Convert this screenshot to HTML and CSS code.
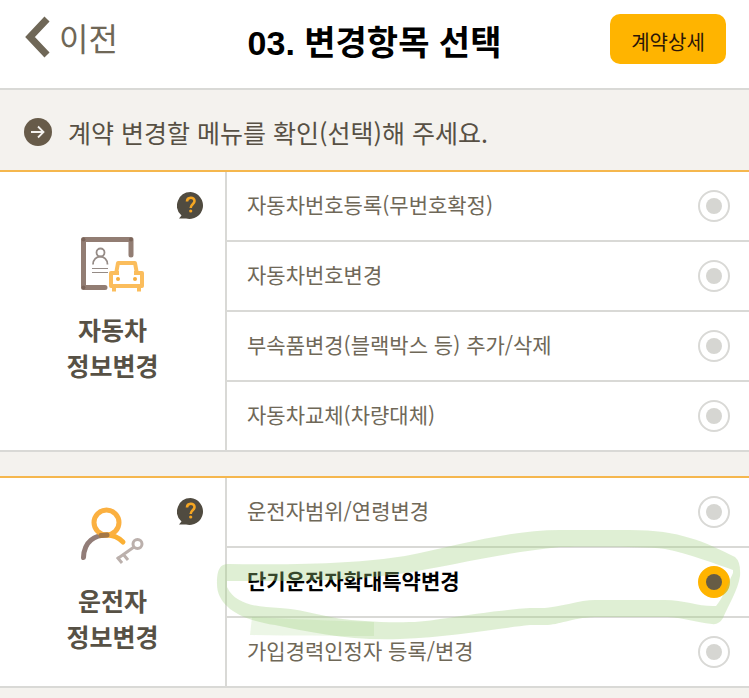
FILE: index.html
```html
<!DOCTYPE html>
<html lang="ko">
<head>
    <meta charset="utf-8">
    <title>변경항목 선택</title>
    <meta name="viewport" content="width=device-width, initial-scale=1">
    <link rel="stylesheet" href="styles.css">
</head>
<body>
    <header class="header">
        <a class="back" href="#">
            <svg width="26" height="42" viewBox="0 0 26 42" aria-hidden="true">
                <path d="M22 3 L5 21 L22 39" fill="none" stroke="#6f6757" stroke-width="7"/>
            </svg>
            이전
        </a>
        <h1 class="title">03. 변경항목 선택</h1>
        <button class="detail" type="button">계약상세</button>
    </header>

    <div class="notice">
        <svg width="28" height="28" viewBox="0 0 28 28" aria-hidden="true">
            <circle cx="14" cy="14" r="14" fill="#675b49"/>
            <path d="M7 14 H19 M14 8.500 L19.500 14 L14 19.500" fill="none" stroke="#f4f2ee" stroke-width="1.800"/>
        </svg>
        <p>계약 변경할 메뉴를 확인(선택)해 주세요.</p>
    </div>

    <form>
        <section class="group">
            <div class="group-head">
                <button class="help" type="button" aria-label="도움말">
                    <svg width="27" height="27" viewBox="0 0 27 27" aria-hidden="true">
                        <path d="M13.500 0 A13.500 13.500 0 1 1 9 26.500 H2 L4.500 23.500 A13.500 13.500 0 0 1 13.500 0 Z" fill="#504b40"/>
                        <path d="M10 9.500 C10 4.500 17.500 4.500 17.500 9 C17.500 12.500 13.700 12 13.700 16" fill="none" stroke="#f5a623" stroke-width="2.600"/>
                        <circle cx="13.700" cy="19" r="1.600" fill="#f5a623"/>
                    </svg>
                </button>
                <svg class="group-icon" viewBox="0 0 65 57" aria-hidden="true">
                    <!-- registration card -->
                    <path d="M51 19 V3.500 H3.500 V51.500 H25" fill="none" stroke="#927d73" stroke-width="5" stroke-linecap="round" stroke-linejoin="round"/>
                    <g fill="#7b6459">
                        <circle cx="3.500" cy="3.500" r="2"/>
                        <circle cx="51" cy="3.500" r="2"/>
                        <circle cx="3.500" cy="51.500" r="2"/>
                    </g>
                    <g fill="none" stroke="#958b86" stroke-width="1.800">
                        <circle cx="20.500" cy="16.500" r="4"/>
                        <path d="M13 28.500 C13 18 27.500 18 27.500 28.500"/>
                        <path d="M12 32.500 H28 M12 36.500 H28" stroke-width="1"/>
                    </g>
                    <!-- car -->
                    <g fill="none" stroke="#fbbd5c" stroke-width="4" stroke-linejoin="round">
                        <path d="M36 38 L38 27 H55 L57 38 M39 37 H31 V50 H62 V37 H54"/>
                        <path d="M34 51 V55.500 M59 51 V55.500"/>
                    </g>
                    <circle cx="38" cy="43" r="2" fill="#f5ad3e"/>
                    <circle cx="55" cy="43" r="2" fill="#f5ad3e"/>
                </svg>
                <h2>자동차<br>정보변경</h2>
            </div>
            <div class="options">
                <label class="option"><span>자동차번호등록(무번호확정)</span><input type="radio" name="item" value="1"></label>
                <label class="option"><span>자동차번호변경</span><input type="radio" name="item" value="2"></label>
                <label class="option"><span>부속품변경(블랙박스 등) 추가/삭제</span><input type="radio" name="item" value="3"></label>
                <label class="option"><span>자동차교체(차량대체)</span><input type="radio" name="item" value="4"></label>
            </div>
        </section>

        <section class="group">
            <div class="group-head">
                <button class="help" type="button" aria-label="도움말">
                    <svg width="27" height="27" viewBox="0 0 27 27" aria-hidden="true">
                        <path d="M13.500 0 A13.500 13.500 0 1 1 9 26.500 H2 L4.500 23.500 A13.500 13.500 0 0 1 13.500 0 Z" fill="#504b40"/>
                        <path d="M10 9.500 C10 4.500 17.500 4.500 17.500 9 C17.500 12.500 13.700 12 13.700 16" fill="none" stroke="#f5a623" stroke-width="2.600"/>
                        <circle cx="13.700" cy="19" r="1.600" fill="#f5a623"/>
                    </svg>
                </button>
                <svg class="group-icon" viewBox="0 0 65 57" aria-hidden="true">
                    <!-- driver -->
                    <g fill="none" stroke-width="5" stroke-linecap="round">
                        <path d="M3.500 50.500 C4 34 15 28 27 28" stroke="#927d78"/>
                        <path d="M27 28 C34 28 39 31 43 35" stroke="#fbb034"/>
                        <circle cx="26.500" cy="15.500" r="12.500" stroke="#fbb040"/>
                        <path d="M21 28.500 L27 28" stroke="#a57845"/>
                    </g>
                    <!-- key -->
                    <g fill="none" stroke="#bbb0ac" stroke-width="3">
                        <circle cx="57.500" cy="37" r="4.500"/>
                        <path d="M54 40 L37 52 M37 50 L42 56 M43 47 L48 53"/>
                    </g>
                </svg>
                <h2>운전자<br>정보변경</h2>
            </div>
            <div class="options">
                <label class="option"><span>운전자범위/연령변경</span><input type="radio" name="item" value="5"></label>
                <label class="option selected"><span>단기운전자확대특약변경</span><input type="radio" name="item" value="6" checked></label>
                <label class="option"><span>가입경력인정자 등록/변경</span><input type="radio" name="item" value="7"></label>
            </div>
            <!-- highlighter stroke round the selected item -->
            <svg class="marker" viewBox="0 0 749 212" preserveAspectRatio="none" aria-hidden="true">
                <path fill-rule="evenodd" d="M217 108 C217 93 220 88 229 88 C310 89 360 87 405 80 C460 69 510 54 560 54 H630 C680 54 705 66 735 81 Q741 86 740 100 C738 114 729 128 723 142 Q719 149 712 148 C695 146 685 142 668 141 H595 C570 142 560 149 545 149 H530 C500 152 450 161 400 163 C350 165 310 156 275 149 C240 144 217 130 217 108 Z
                    M227 105 V111 C235 128 255 131 280 132 C310 134 325 143 365 145 C390 147 420 147 440 143 C475 138 500 134 530 132 H545 C560 131 580 124 595 124 H665 C685 124 700 131 716 130 C723 122 727 110 733 97 V94 C716 88 690 78 665 73 C640 70 590 71 560 71 C500 77 450 90 405 97 C360 104 310 105 275 105 Z"/>
                <path class="marker-overlap" d="M252 141 C290 143 330 145 374 146 V160 C330 160 290 160 250 159 Z"/>
            </svg>
        </section>
    </form>
</body>
</html>
```

FILE: styles.css
```css
* {
    box-sizing: border-box;
}
body {
    font-family: "Noto Sans CJK KR", sans-serif;
    background-color: #f4f2ee;
    color: #6f6858;
    margin: 0;
}
h1, h2, p {
    margin: 0;
}
button {
    font-family: inherit;
    border: 0;
    padding: 0;
    cursor: pointer;
}
.header {
    display: grid;
    grid-template-columns: 1fr auto 1fr;
    align-items: center;
    background-color: #fff;
    border-bottom: 2px solid #d9d9d6;
    padding: 14px 23px 24px;
}
.back {
    display: flex;
    align-items: center;
    gap: 8px;
    padding: 0 0 4px 2px;
    color: #6f6757;
    font-size: 32px;
    line-height: 44px;
    text-decoration: none;
}
.title {
    padding-top: 8px;
    color: #000;
    font-family: "Liberation Sans", "Noto Sans CJK KR", sans-serif;
    font-size: 34px;
    line-height: 40px;
}
.detail {
    justify-self: end;
    width: 116px;
    height: 50px;
    padding-top: 4px;
    border-radius: 10px;
    background-color: #ffb400;
    color: #2b1608;
    font-size: 20px;
}
.notice {
    display: flex;
    align-items: center;
    gap: 16px;
    padding: 23px 24px 19px;
    color: #575044;
    font-size: 25px;
    line-height: 38px;
}
.group {
    position: relative;
    display: flex;
    background-color: #fff;
    border-top: 2px solid #f5b74e;
    border-bottom: 2px solid #d9d9d6;
    margin-bottom: 24px;
}
.group:last-child {
    margin-bottom: 0;
}
.group-head {
    position: relative;
    flex: 0 0 227px;
    display: flex;
    flex-direction: column;
    align-items: center;
    justify-content: center;
    gap: 18px;
    padding-bottom: 4px;
    border-right: 2px solid #d9d9d6;
}
.group-icon {
    width: 65px;
    height: 57px;
}
.group-head h2 {
    color: #575145;
    font-size: 25px;
    line-height: 36px;
    text-align: center;
}
.help {
    position: absolute;
    top: 20px;
    right: 21px;
    background: none;
    line-height: 0;
}
.options {
    flex: 1;
}
.option {
    display: flex;
    align-items: center;
    justify-content: space-between;
    height: 70px;
    padding: 0 19px 0 20px;
    border-bottom: 2px solid #d9d9d6;
    font-size: 21px;
    cursor: pointer;
}
.option:last-child {
    height: 68px;
    border-bottom: 0;
}
.option span {
    padding-bottom: 4px;
}
.option input {
    -webkit-appearance: none;
    appearance: none;
    display: grid;
    place-items: center;
    width: 32px;
    height: 32px;
    margin: 0;
    border: 2px solid #d9d9d6;
    border-radius: 50%;
    background-color: #fff;
}
.option input::before {
    content: "";
    width: 16px;
    height: 16px;
    border-radius: 50%;
    background-color: #d6d6d2;
}
.option input:checked {
    border-color: #ffb400;
    background-color: #ffb400;
}
.option input:checked::before {
    background-color: #675c45;
}
.selected {
    color: #000;
    font-weight: bold;
}
.marker {
    position: absolute;
    top: -2px;
    left: 0;
    width: 100%;
    height: 212px;
    fill: #a0d080;
    fill-opacity: 0.34;
    pointer-events: none;
}
.marker-overlap {
    fill-opacity: 0.2;
}
```
